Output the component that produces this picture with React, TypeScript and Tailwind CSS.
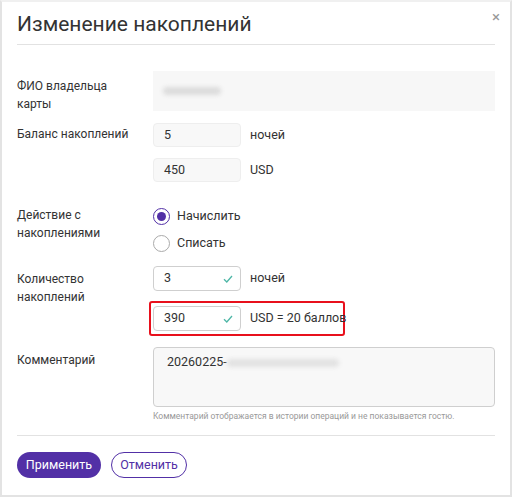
import React, { useState } from 'react'

const font = { fontFamily: 'Roboto, "Noto Sans", sans-serif' }

function Check() {
  return (
    <svg width="10" height="8" viewBox="0 0 10 8" className="absolute right-[7px] top-1/2 -translate-y-1/2">
      <path d="M1 4.2 L3.8 7 L9 1" fill="none" stroke="#4db6a6" strokeWidth="1.3" />
    </svg>
  )
}

function Radio({ checked, label }: { checked: boolean; label: string }) {
  return (
    <label className="flex items-center h-[20px] gap-[7px] text-[12.5px] text-[#333]">
      <span
        className={
          'w-[17px] h-[17px] rounded-full border flex items-center justify-center bg-white ' +
          (checked ? 'border-[#5230a6] border-[1.5px]' : 'border-[#aaa]')
        }
      >
        {checked && <span className="w-[9px] h-[9px] rounded-full bg-[#5230a6]" />}
      </span>
      {label}
    </label>
  )
}

export default function App() {
  const [action] = useState('add')

  return (
    <div style={font} className="w-[512px] h-[497px] bg-white border-2 border-[#e3e3e3] border-t-[#f0f0f0] relative text-[#333]">
      <button className="absolute right-[10px] top-[8px] text-[#999] text-[15px] leading-none">×</button>

      <div className="px-[15px]">
        {/* Header */}
        <div className="pt-[10px] pb-[8px] border-b border-[#e2e2e2]">
          <h1 className="text-[21px] leading-[24px] text-[#333]">Изменение накоплений</h1>
        </div>

        {/* Owner */}
        <div className="flex mt-[26px]">
          <div className="w-[136px] shrink-0 pt-[6px] text-[12px] leading-[18px]">ФИО владельца<br />карты</div>
          <div className="flex-1 h-[40px] bg-[#f7f7f7] flex items-center px-[10px]">
            <span className="w-[58px] h-[8px] bg-[#dcdcdc] rounded blur-[2px]" />
          </div>
        </div>

        {/* Balance */}
        <div className="flex mt-[10px]">
          <div className="w-[136px] shrink-0 pt-[2px] text-[12px] leading-[18px]">Баланс накоплений</div>
          <div className="flex flex-col gap-[11px] text-[12.5px]">
            <div className="flex items-center gap-[9px]">
              <div className="w-[88px] h-[24px] rounded-[4px] bg-[#f8f8f8] border border-[#eeeeee] flex items-center px-[10px]">5</div>
              <span>ночей</span>
            </div>
            <div className="flex items-center gap-[9px]">
              <div className="w-[88px] h-[24px] rounded-[4px] bg-[#f8f8f8] border border-[#eeeeee] flex items-center px-[10px]">450</div>
              <span>USD</span>
            </div>
          </div>
        </div>

        {/* Action */}
        <div className="flex mt-[24px]">
          <div className="w-[136px] shrink-0 text-[12px] leading-[18px]">Действие с<br />накоплениями</div>
          <div className="flex flex-col gap-[7px]">
            <Radio checked={action === 'add'} label="Начислить" />
            <Radio checked={action !== 'add'} label="Списать" />
          </div>
        </div>

        {/* Amount */}
        <div className="flex mt-[13px]">
          <div className="w-[136px] shrink-0 pt-[4px] text-[12px] leading-[18px]">Количество<br />накоплений</div>
          <div className="flex flex-col text-[12.5px]">
            <div className="flex items-center gap-[9px]">
              <div className="relative w-[88px] h-[25px] rounded-[4px] bg-white border border-[#cfcfcf] flex items-center px-[10px]">
                3
                <Check />
              </div>
              <span>ночей</span>
            </div>
            <div className="mt-[10px] -ml-[4px] w-[196px] h-[35px] border-2 border-[#e8101c] rounded-[3px] flex items-center gap-[9px] pl-[2px]">
              <div className="relative w-[88px] h-[25px] shrink-0 rounded-[4px] bg-white border border-[#cfcfcf] flex items-center px-[10px]">
                390
                <Check />
              </div>
              <span className="whitespace-nowrap">USD = 20 баллов</span>
            </div>
          </div>
        </div>

        {/* Comment */}
        <div className="flex mt-[11px]">
          <div className="w-[136px] shrink-0 pt-[4px] text-[12px] leading-[18px]">Комментарий</div>
          <div className="flex-1">
            <div className="h-[60px] rounded-[4px] bg-[#f8f8f8] border border-[#cfcfcf] px-[13px] pt-[5px] text-[12.5px] flex items-start">
              <span>20260225-</span>
              <span className="mt-[6px] w-[112px] h-[8px] bg-[#e2e2e2] rounded blur-[2px]" />
            </div>
            <p className="mt-[3px] text-[8.5px] leading-[12px] text-[#999]">
              Комментарий отображается в истории операций и не показывается гостю.
            </p>
          </div>
        </div>

        {/* Footer */}
        <div className="mt-[13px] border-t border-[#e2e2e2] pt-[16px] flex gap-[10px]">
          <button className="h-[26px] w-[84px] rounded-full bg-[#5230a6] text-white text-[12.5px]">Применить</button>
          <button className="h-[26px] w-[76px] rounded-full bg-white border border-[#5230a6] text-[#5230a6] text-[12.5px]">Отменить</button>
        </div>
      </div>
    </div>
  )
}
